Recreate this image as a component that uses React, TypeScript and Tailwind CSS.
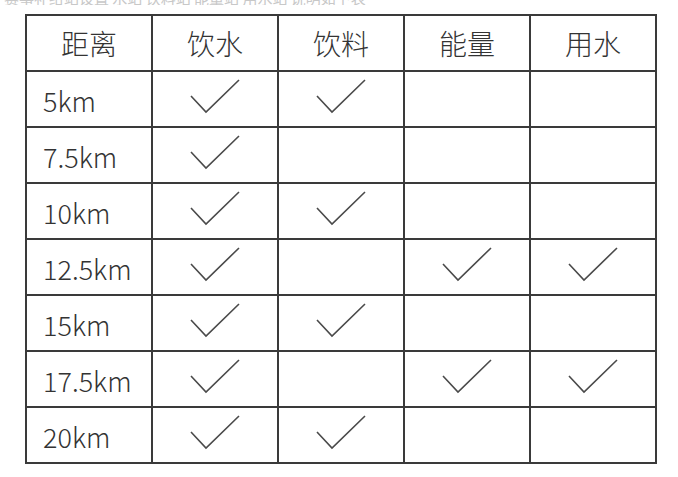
import { FC } from 'react';

const rows: { d: string; c: boolean[] }[] = [
  { d: '5km', c: [true, true, false, false] },
  { d: '7.5km', c: [true, false, false, false] },
  { d: '10km', c: [true, true, false, false] },
  { d: '12.5km', c: [true, false, true, true] },
  { d: '15km', c: [true, true, false, false] },
  { d: '17.5km', c: [true, false, true, true] },
  { d: '20km', c: [true, true, false, false] },
];

const headers = ['距离', '饮水', '饮料', '能量', '用水'];

const Check: FC = () => (
  <svg width="50" height="35" viewBox="0 0 50 35" className="mx-auto -mt-[5px]">
    <path d="M1 17 L16 33 L49 1" fill="none" stroke="#4a4a4a" strokeWidth="1.6" />
  </svg>
);

export default function App() {
  return (
    <div className="h-[477px] w-[678px] overflow-hidden bg-white font-['Noto_Sans_CJK_SC',sans-serif] text-[#333]">
      <div className="h-[5px] overflow-hidden pl-1 text-[15px] leading-[15px] text-[#c8c8c8]">
        <div className="-mt-[10px]">赛事补给站设置 水站 饮料站 能量站 用水站 说明如下表</div>
      </div>
      <div className="pl-[25px] pt-[9px]">
        <table className="border-collapse">
          <thead>
            <tr>
              {headers.map((h) => (
                <th
                  key={h}
                  className="h-[56px] w-[126px] border-2 border-[#3a3a3a] p-0 text-center text-[28px] font-light"
                >
                  {h}
                </th>
              ))}
            </tr>
          </thead>
          <tbody>
            {rows.map((r) => (
              <tr key={r.d}>
                <td className="h-[56px] w-[126px] border-2 border-[#3a3a3a] p-0 pl-4 pt-[4px] text-[27px] font-light">
                  {r.d}
                </td>
                {r.c.map((v, i) => (
                  <td key={i} className="h-[56px] w-[126px] border-2 border-[#3a3a3a] p-0">
                    {v && <Check />}
                  </td>
                ))}
              </tr>
            ))}
          </tbody>
        </table>
      </div>
    </div>
  );
}
